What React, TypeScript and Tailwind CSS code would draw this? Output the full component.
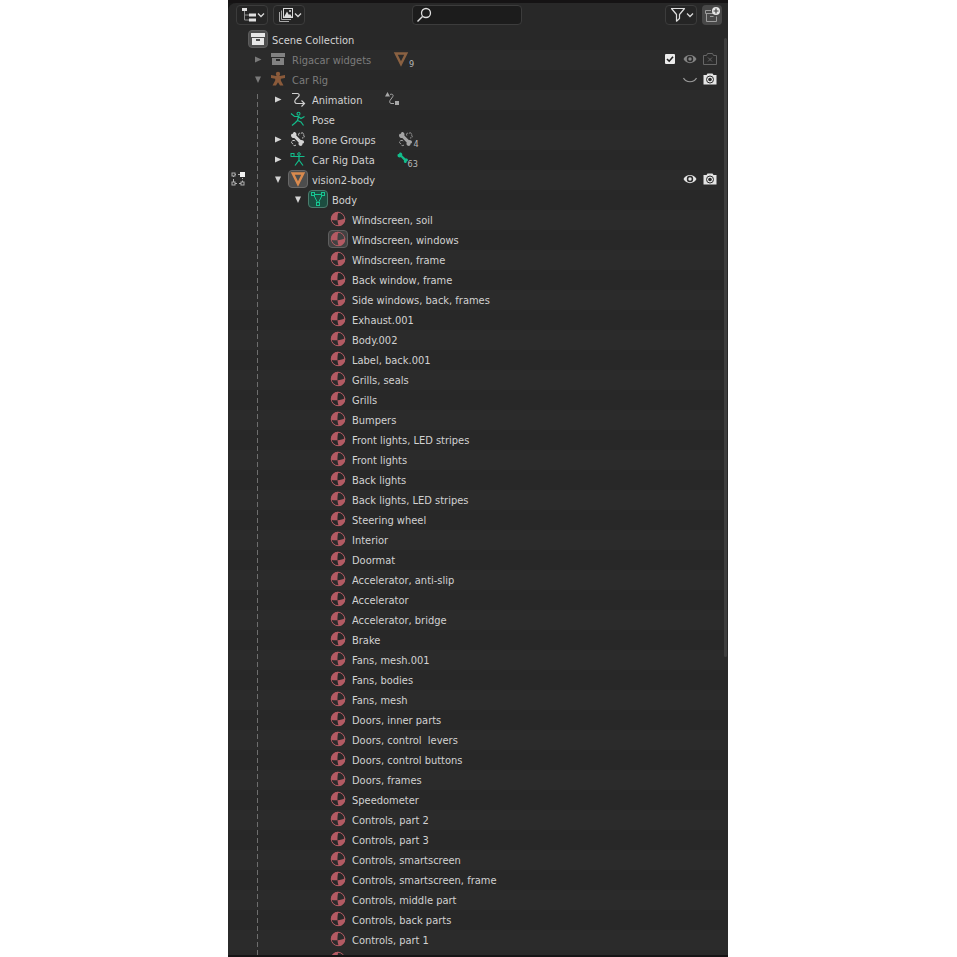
import React, { useState } from "react";

const materials = [
  "Windscreen, soil",
  "Windscreen, windows",
  "Windscreen, frame",
  "Back window, frame",
  "Side windows, back, frames",
  "Exhaust.001",
  "Body.002",
  "Label, back.001",
  "Grills, seals",
  "Grills",
  "Bumpers",
  "Front lights, LED stripes",
  "Front lights",
  "Back lights",
  "Back lights, LED stripes",
  "Steering wheel",
  "Interior",
  "Doormat",
  "Accelerator, anti-slip",
  "Accelerator",
  "Accelerator, bridge",
  "Brake",
  "Fans, mesh.001",
  "Fans, bodies",
  "Fans, mesh",
  "Doors, inner parts",
  "Doors, control  levers",
  "Doors, control buttons",
  "Doors, frames",
  "Speedometer",
  "Controls, part 2",
  "Controls, part 3",
  "Controls, smartscreen",
  "Controls, smartscreen, frame",
  "Controls, middle part",
  "Controls, back parts",
  "Controls, part 1",
];

interface IIcon {
  className?: string;
  children: React.ReactNode;
}
const Icon = ({ className = "", children }: IIcon) => (
  <svg
    viewBox="0 0 16 16"
    width="16"
    height="16"
    fill="none"
    stroke="currentColor"
    className={`shrink-0 ${className}`}
    aria-hidden="true"
  >
    {children}
  </svg>
);

const IconChevron = () => (
  <svg viewBox="0 0 8 8" width="8" height="8" fill="none" stroke="#d8d8d8" strokeWidth="1.3" aria-hidden="true">
    <path d="M1 2.500 4 5.500 7 2.500" />
  </svg>
);

const IconOutliner = () => (
  <Icon className="text-[#e0e0e0]">
    <path d="M3.500 4V13H8M3.500 8H8" stroke="#8f8f8f" />
    <g fill="currentColor" stroke="none">
      <rect x="1" y="1" width="5" height="3" />
      <rect x="8" y="6.500" width="7" height="3" />
      <rect x="8" y="11.500" width="7" height="3" />
    </g>
  </Icon>
);

const IconImages = () => (
  <Icon className="text-[#dcdcdc]">
    <path d="M1.500 5V14.500H11M3.500 3.500V12.500H13" stroke="#a8a8a8" />
    <rect x="5.500" y="1.500" width="9" height="9" />
    <path d="M6 10 9 4.500 11 8 12 7 14 10Z" fill="currentColor" stroke="none" />
    <circle cx="12" cy="4" r="1" fill="currentColor" stroke="none" />
  </Icon>
);

const IconSearch = () => (
  <Icon className="text-[#dedede]">
    <circle cx="10" cy="6" r="4.500" strokeWidth="1.300" />
    <path d="M6.500 9.500 1.500 14.500" strokeWidth="1.500" />
  </Icon>
);

const IconFilter = () => (
  <Icon className="text-[#dedede]">
    <path d="M1.500 1.500H14.500L9.500 7.500V11.500L6.500 14.200V7.500Z" strokeWidth="1.200" strokeLinejoin="round" />
  </Icon>
);

const IconNewCollection = () => (
  <Icon className="text-[#9c9c9c]">
    <path d="M7 3.500H1.500V6.500H10M2.500 6.500V14.500H12.500V9.500M6 9.500H9.500" />
    <circle cx="12" cy="4" r="4" fill="#e6e6e6" stroke="none" />
    <path d="M12 1.500V6.500M9.500 4H14.500" stroke="#444444" strokeWidth="1.200" />
  </Icon>
);

const IconCollection = ({ className }: { className: string }) => (
  <Icon className={className}>
    <g fill="currentColor" stroke="none">
      <rect x="1" y="2" width="14" height="4" />
      <path fillRule="evenodd" d="M2 7H14V14H2ZM6 8V10H10V8Z" />
    </g>
  </Icon>
);

const IconArmature = () => (
  <Icon className="text-[#8a5a3a]">
    <g fill="currentColor" stroke="none">
      <circle cx="8" cy="3" r="2.200" />
      <path d="M1 4 6 5H10L15 4V7L10.800 7.800V9.500L13.500 14.500H10L8 11.200 6 14.500H2.500L5.200 9.500V7.800L1 7Z" />
    </g>
  </Icon>
);

const IconAnimation = () => (
  <Icon className="text-[#d0d0d0]">
    <path d="M2 2.500H7.500C9.500 2.500 9.500 4.500 8.500 5.500L5.500 8.500C4 10.500 5 12.500 7 12.500H14" strokeWidth="1.200" />
    <path d="M11.500 9.500 14.500 12.500 11.500 15.500" strokeWidth="1.200" />
  </Icon>
);

const IconPose = () => (
  <Icon className="text-[#12bd8b]">
    <circle cx="8.500" cy="2.800" r="1.500" strokeWidth="1.100" />
    <path
      d="M1 2.500 4.500 5.500H8.500L11 7.500 14.500 5.500M8.500 5.500 7.500 9.500 11 11 13.500 14.500M7.500 9.500 5 12 2 14.500"
      strokeWidth="1.200"
    />
  </Icon>
);

const IconBoneGroup = ({ className }: { className: string }) => (
  <Icon className={className}>
    <path
      d="M1 4.500C1 3 2.300 2.600 3 3 2.800 1.500 4.200.5 5.500 1.500 6.800 2.500 6.500 3.800 6.300 4.600L10.800 9C12 8.700 14.300 9.500 14 11.200 13.800 12.300 13 12.500 12.500 12.500 12.700 14 11.500 15.300 10 14.800 8.500 14.200 8.200 12.800 8.700 11.500L4.300 7.100C2.800 7.300 1 6.200 1 4.500Z"
      fill="currentColor"
      stroke="none"
    />
    <path
      d="M8.800 4.500C8 2.500 9.500 1.500 10.800 2.500 12.500 1 14.500 2.500 13.500 4.200 15 5.500 14 7.500 12 6.800M6 14C4.500 15.200 3 14.500 3.200 12.800 1 12.500 1 10 3 9.500 4.500 9 5.500 10 5.500 11"
      strokeDasharray="3 1"
    />
  </Icon>
);

const IconArmatureData = () => (
  <Icon className="text-[#12bd8b]">
    <rect x="1" y="2.500" width="3" height="3" />
    <circle cx="9" cy="3" r="1.300" />
    <path d="M4 5.500H14.500M9 4.500V9L5 14.500M9 9 13 14.500" strokeWidth="1.200" />
  </Icon>
);

const IconMeshObject = ({ className }: { className: string }) => (
  <Icon className={className}>
    <path d="M2.800 2.500H13.200L8 13Z" strokeWidth="2.500" />
  </Icon>
);

const IconMeshData = () => (
  <Icon className="text-[#16c792]">
    <path d="M3.500 3.500H12.500L8 12.500Z" />
    <g fill="#1c4d40">
      <rect x="1.500" y="1.500" width="3" height="3" />
      <rect x="11.500" y="1.500" width="3" height="3" />
      <rect x="6.500" y="11.500" width="3" height="3" />
    </g>
  </Icon>
);

const IconMaterial = () => (
  <Icon className="text-[#b35a63]">
    <circle cx="8" cy="8" r="6.700" />
    <path
      d="M8.500.8A7.200 7.200 0 0 0 .8 8.500C3 9.300 5 9.500 7.500 9.300 7.300 6 7.600 3.300 8.500.8ZM7.500 9.300C7.600 11.500 8 13.300 8.800 15.200A7.200 7.200 0 0 0 15.200 7C13 8.400 10.500 9.100 7.500 9.300Z"
      fill="currentColor"
      stroke="none"
    />
  </Icon>
);

const IconBone = () => (
  <Icon className="text-[#12bd8b]">
    <path
      d="M.5 4.500C.5 3 1.500 3 2 3.200 2 1.500 4 1 5 2.500 5.500 3.500 5.300 4 5.200 4.500L8.500 7.500C10 7.200 11 8 11 9 11 10 10 10.200 9.700 10.200 10 11.500 9 12.300 8 12 6.700 11.500 6.700 10.500 7 9.500L4 6.300C2 6.800.5 6 .5 4.500Z"
      fill="currentColor"
      stroke="none"
    />
  </Icon>
);

const IconAction = () => (
  <Icon className="text-[#a8a8a8]">
    <path d="M1 5.500 3.500 1 6 5.500ZM11 10H15V14H11Z" fill="currentColor" stroke="none" />
    <path d="M6 3.500C8.500 2.500 10 4 8.500 6L6 9.500C5 11.500 6.500 13 8 12.500H10" />
  </Icon>
);

const IconEditMode = () => (
  <Icon className="text-[#b0b0b0]">
    <path d="M5 3.500H6M8 3.500H10M3.500 5V6M3.500 8V11M5 12.500H7M9 12.500H11M12.500 7V8M12.500 9.500V11" />
    <rect x="2" y="2" width="3" height="3" />
    <rect x="2" y="11" width="3" height="3" />
    <rect x="11" y="11" width="3" height="3" />
    <rect x="10" y="1" width="5" height="5" fill="#f2f2f2" stroke="none" />
  </Icon>
);

const IconEye = () => (
  <Icon>
    <path
      fillRule="evenodd"
      d="M1.500 8C4 2.500 12 2.500 14.500 8 12 13.500 4 13.500 1.500 8ZM8 4.800A3.200 3.200 0 1 0 8 11.200 3.200 3.200 0 1 0 8 4.800Z"
      fill="currentColor"
      stroke="none"
    />
    <circle cx="8" cy="8" r="1.700" fill="currentColor" stroke="none" />
  </Icon>
);

const IconEyeClosed = () => (
  <Icon className="text-[#9a9a9a]">
    <path d="M1.500 7C4 12 12 12 14.500 7" strokeWidth="1.200" />
  </Icon>
);

const IconCamera = () => (
  <Icon className="text-[#e4e4e4]">
    <path d="M1.500 4H4.500L5.500 2.500H10.500L11.500 4H14.500V13.500H1.500Z" fill="currentColor" stroke="none" />
    <circle cx="8" cy="8.500" r="3.500" stroke="#2b2b2b" />
    <circle cx="8" cy="8.500" r="1.800" fill="#2b2b2b" stroke="none" />
  </Icon>
);

const IconCameraOff = () => (
  <Icon className="text-[#666666]">
    <path d="M1.500 4.500H4.500L5.500 2.500H10.500L11.500 4.500H14.500V13.500H1.500ZM6 6.500 10 10.500M10 6.500 6 10.500" />
  </Icon>
);

interface IRow {
  name: string;
  depth: number;
  icon: React.ReactNode;
  iconBox?: string;
  open?: boolean;
  dim?: boolean;
  mode?: React.ReactNode;
  extra?: React.ReactNode;
  count?: number;
  controls?: React.ReactNode;
}

const indents = ["", "pl-0", "pl-5", "pl-10", "pl-15"];

const Row = ({ name, depth, icon, iconBox = "border-transparent", open, dim, mode, extra, count, controls }: IRow) => {
  return (
    <li className="flex h-5 items-start pr-2 odd:bg-[#282828] even:bg-[#2b2b2b]">
      <span className="flex h-[18px] w-5 shrink-0 items-center justify-center">{mode}</span>
      <span className={`flex min-w-0 flex-1 items-start ${indents[depth]}`}>
        {depth > 0 && (
          <span className="flex h-5 w-5 shrink-0 items-center justify-center">
            {open !== undefined && (
              <button aria-label={`Toggle ${name}`} className={dim ? "text-[#7a7a7a]" : "text-[#d4d4d4]"}>
                <svg viewBox="0 0 8 8" width="8" height="8" fill="currentColor" aria-hidden="true">
                  {open ? <path d="M1 .5H7L4 7Z" /> : <path d="M1 .5V6.500L7.500 3.500Z" />}
                </svg>
              </button>
            )}
          </span>
        )}
        <span className={`flex h-[18px] w-5 shrink-0 items-center justify-center rounded-[4px] border ${iconBox}`}>
          {icon}
        </span>
        <span className={`ml-1 whitespace-pre leading-[22px] ${dim ? "text-[#7c7c7c]" : "text-[#d2d2d2]"}`}>{name}</span>
        {extra && (
          <span className="relative ml-5 flex h-[18px] w-5 items-center justify-center">
            {extra}
            {count && (
              <span className="absolute top-2 -right-[3px] text-[9px] leading-3 text-[#b8b8b8]">{count}</span>
            )}
          </span>
        )}
      </span>
      <span className="flex h-[18px] shrink-0 items-center">{controls}</span>
    </li>
  );
};

interface IToggle {
  label: string;
  className?: string;
  children: React.ReactNode;
}
const Toggle = ({ label, className = "", children }: IToggle) => (
  <button aria-label={label} className={`flex w-5 items-center justify-center ${className}`}>
    {children}
  </button>
);

const menuButton =
  "flex h-5 w-8 items-center justify-between rounded-[4px] border border-[#3c3c3c] bg-[#252525] pl-1 pr-[2px]";

const Header = () => {
  const [search, setSearch] = useState("");
  return (
    <header className="grid h-[27px] grid-cols-[22fr_110px_25fr] items-start rounded-tl-lg bg-[#282828] pt-[2px] pl-2 pr-[6px]">
      <div className="flex gap-[5px]">
        <button aria-label="Editor type" className={menuButton}>
          <IconOutliner />
          <IconChevron />
        </button>
        <button aria-label="Display mode" className={menuButton}>
          <IconImages />
          <IconChevron />
        </button>
      </div>
      <label className="flex h-5 items-center rounded-[4px] border border-[#3c3c3c] bg-[#1c1c1c] pl-[3px]">
        <IconSearch />
        <input
          type="text"
          aria-label="Search"
          value={search}
          onChange={(e) => setSearch(e.target.value)}
          className="w-full min-w-0 bg-transparent px-1 text-[#d6d6d6] outline-none"
        />
      </label>
      <div className="flex justify-end gap-[5px]">
        <button aria-label="Filter" className={menuButton}>
          <IconFilter />
          <IconChevron />
        </button>
        <button aria-label="New collection" className="flex h-5 w-5 items-center justify-center rounded-[4px] bg-[#484848]">
          <IconNewCollection />
        </button>
      </div>
    </header>
  );
};

const App = () => {
  const [enabled, setEnabled] = useState(true);
  return (
    <main className="flex h-screen justify-center bg-white pr-px font-['DejaVu_Sans_Condensed','Noto_Sans',sans-serif] text-[11px]">
      <section className="flex w-full max-w-[500px] flex-col border-t-[3px] border-b-2 border-[#151314] bg-[#171717]">
        <Header />
        <div className="relative min-h-0 flex-1 overflow-hidden bg-[#282828]">
          <ul>
            <Row
              name="Scene Collection"
              depth={0}
              icon={<IconCollection className="text-[#e6e6e6]" />}
              iconBox="border-[#5c5c5c] bg-[#4d4d4d]"
            />
            <Row
              name="Rigacar widgets"
              depth={1}
              open={false}
              dim
              icon={<IconCollection className="text-[#828282]" />}
              extra={<IconMeshObject className="text-[#8a6142]" />}
              count={9}
              controls={
                <>
                  <label className="relative flex w-5 items-center justify-center">
                    <input
                      type="checkbox"
                      aria-label="Exclude from view layer"
                      checked={enabled}
                      onChange={() => setEnabled(!enabled)}
                      className="h-[10px] w-[10px] appearance-none rounded-[1px] bg-[#ececec]"
                    />
                    {enabled && (
                      <svg viewBox="0 0 10 10" width="10" height="10" fill="none" className="absolute" aria-hidden="true">
                        <path d="M2 5 4.200 7.200 8 2.800" stroke="#222222" strokeWidth="1.600" />
                      </svg>
                    )}
                  </label>
                  <Toggle label="Hide in viewport" className="text-[#848484]">
                    <IconEye />
                  </Toggle>
                  <Toggle label="Disable in renders">
                    <IconCameraOff />
                  </Toggle>
                </>
              }
            />
            <Row
              name="Car Rig"
              depth={1}
              open
              dim
              icon={<IconArmature />}
              controls={
                <>
                  <Toggle label="Hide in viewport">
                    <IconEyeClosed />
                  </Toggle>
                  <Toggle label="Disable in renders">
                    <IconCamera />
                  </Toggle>
                </>
              }
            />
            <Row name="Animation" depth={2} open={false} icon={<IconAnimation />} extra={<IconAction />} />
            <Row name="Pose" depth={2} icon={<IconPose />} />
            <Row
              name="Bone Groups"
              depth={2}
              open={false}
              icon={<IconBoneGroup className="text-[#d4d4d4]" />}
              extra={<IconBoneGroup className="text-[#a4a4a4]" />}
              count={4}
            />
            <Row name="Car Rig Data" depth={2} open={false} icon={<IconArmatureData />} extra={<IconBone />} count={63} />
            <Row
              name="vision2-body"
              depth={2}
              open
              mode={<IconEditMode />}
              icon={<IconMeshObject className="text-[#d98a4e]" />}
              iconBox="border-[#686868] bg-[#4d4d4d]"
              controls={
                <>
                  <Toggle label="Hide in viewport" className="text-[#e4e4e4]">
                    <IconEye />
                  </Toggle>
                  <Toggle label="Disable in renders">
                    <IconCamera />
                  </Toggle>
                </>
              }
            />
            <Row name="Body" depth={3} open icon={<IconMeshData />} iconBox="border-[#4b7a6c] bg-[#1c4d40]" />
            {materials.map((name, index) => (
              <Row
                key={name}
                name={name}
                depth={4}
                icon={<IconMaterial />}
                iconBox={index === 1 ? "border-[#5e5e5e] bg-[#414141]" : "border-transparent"}
              />
            ))}
            <Row name="" depth={4} icon={<IconMaterial />} />
          </ul>
          {/* hierarchy line under Car Rig */}
          <div className="absolute top-16 bottom-0 left-[29px] w-px bg-[repeating-linear-gradient(to_bottom,#6e6e6e_0_5px,transparent_5px_8px)]" />
          {/* scrollbar */}
          <div className="absolute top-2 right-px h-[619px] w-[3px] rounded-full bg-[#3e3e3e]" />
        </div>
      </section>
    </main>
  );
};

export default App;
